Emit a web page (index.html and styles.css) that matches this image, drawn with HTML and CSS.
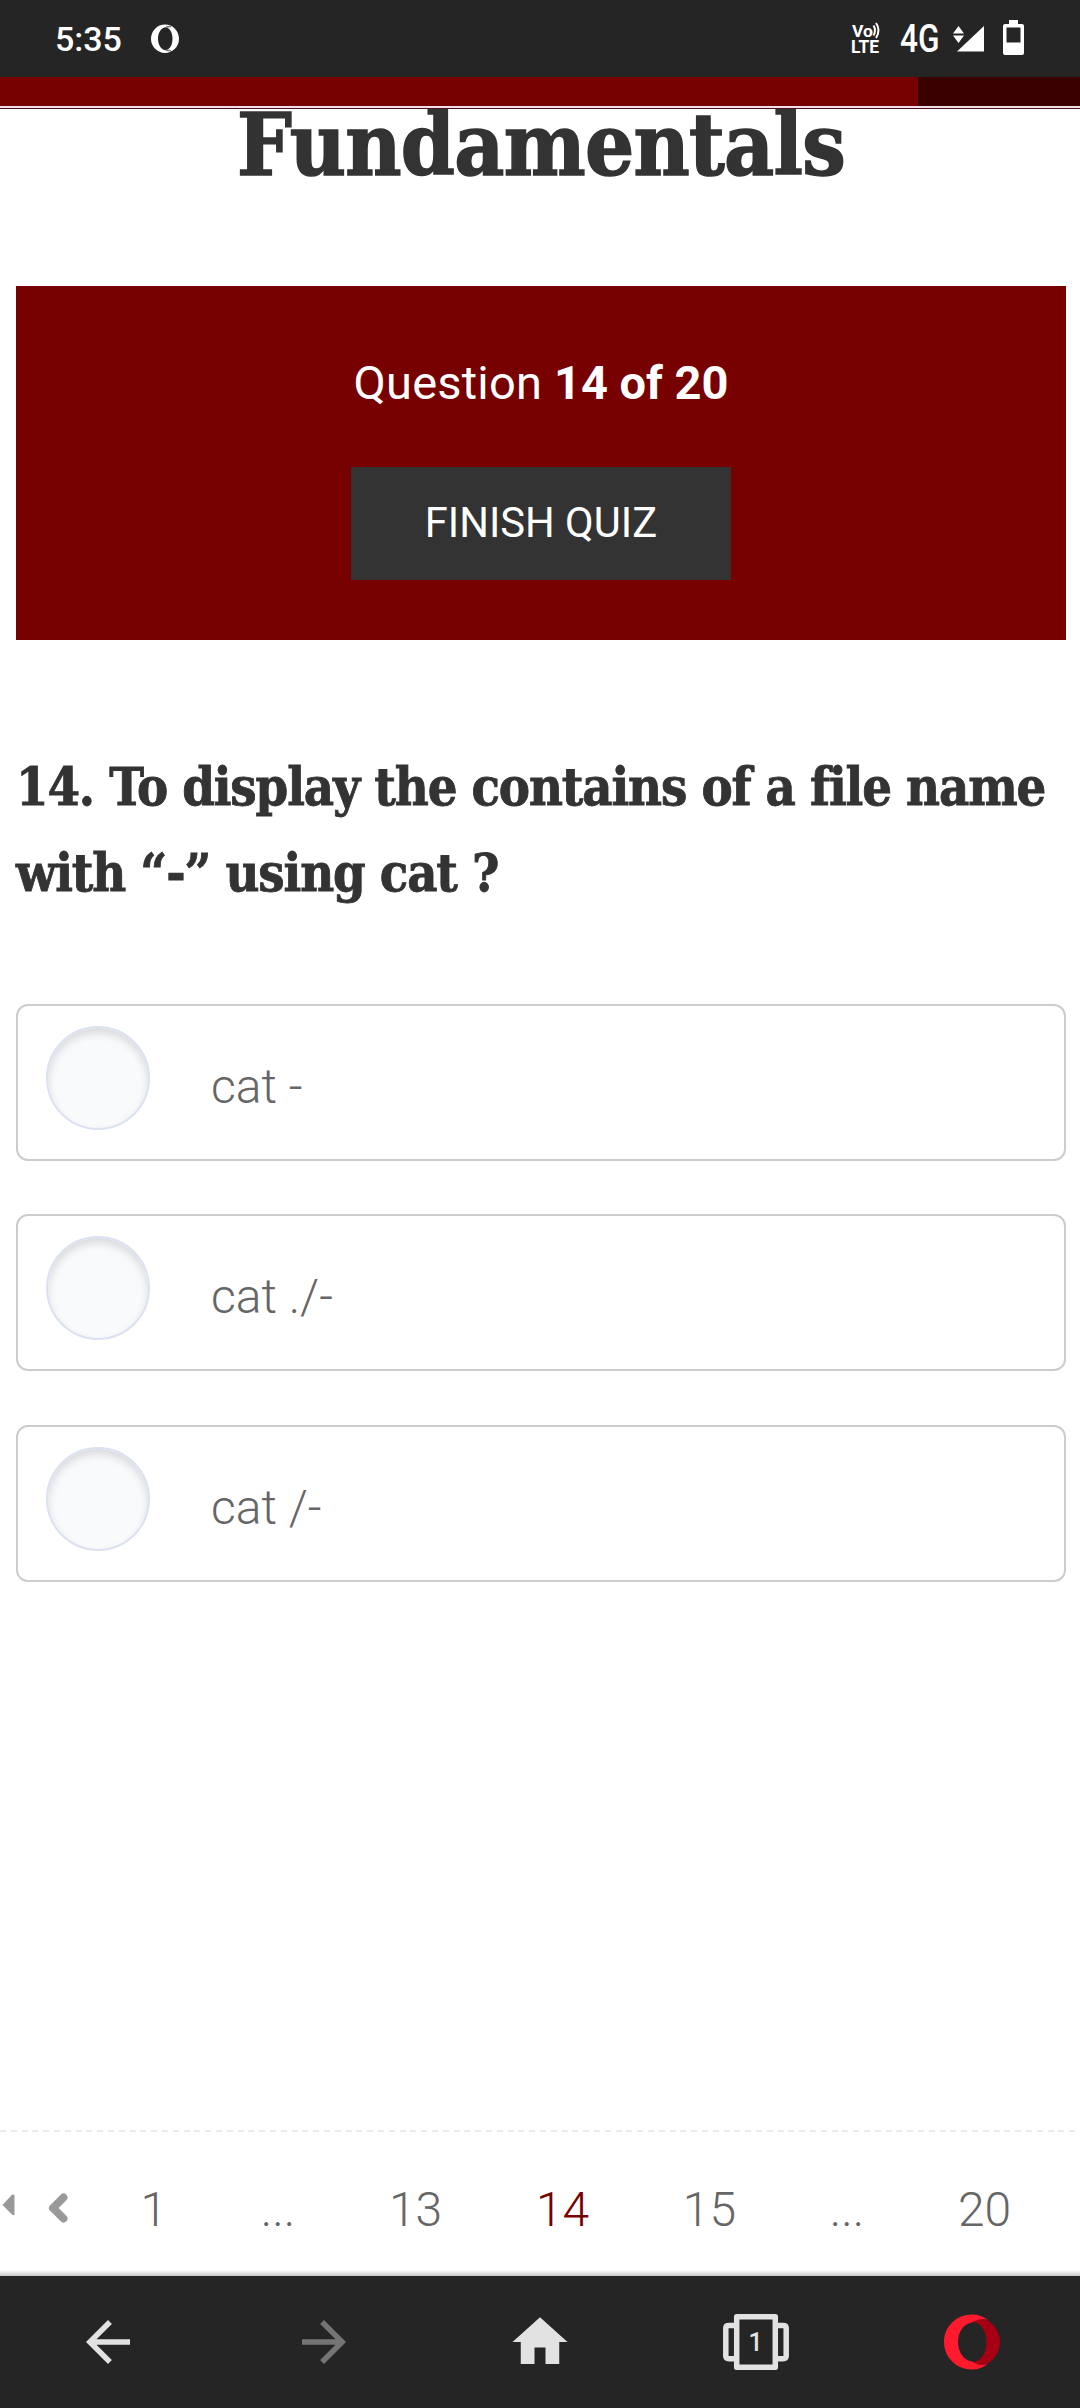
FILE: index.html
```html
<!DOCTYPE html>
<html lang="en">
<head>
<meta charset="utf-8">
<title>Fundamentals quiz</title>
<link rel="stylesheet" href="styles.css">
</head>
<body>
<div class="phone">
  <header class="status">
    <span class="clock">5:35</span>
    <svg class="opera-mini" width="28" height="30" viewBox="0 0 28 30"><path fill="#fff" fill-rule="evenodd" d="M14 0.5a14 14.2 0 0 0 0 28.4a14 14.2 0 0 0 0-28.4zM15 3.200c4.200 1 6.500 5.800 6.500 11.500s-2.300 10.500-6.500 11.500c-4.700-.3-8-5.200-8-11.500s3.300-11.200 8-11.500z"/><path d="M15 3l5-.5M15 26.300l5 .5" stroke="#777" stroke-width="1.500"/></svg>
    <div class="indicators">
      <svg class="volte" width="30" height="32" viewBox="0 0 30 32">
        <text x="1" y="14.500" font-size="17" textLength="21" lengthAdjust="spacingAndGlyphs">Vo</text>
        <text x="0" y="31" font-size="18" textLength="28" lengthAdjust="spacingAndGlyphs">LTE</text>
        <path d="M22.500 3.500q3 4.500 0 10M25 1q5 7 0 15" fill="none" stroke="#fff" stroke-width="2"/>
      </svg>
      <svg class="network" width="40" height="34" viewBox="0 0 40 34"><text x="0" y="31" font-size="38" textLength="39.500" lengthAdjust="spacingAndGlyphs">4G</text></svg>
      <svg class="signal" width="32" height="28" viewBox="0 0 32 28"><path fill="#fff" d="M31 1v25.500H4zM5.500 1l5.500 7.500H0zM0 10.500h11L5.500 18z"/></svg>
      <svg class="battery" width="21" height="36" viewBox="0 0 21 36"><path fill="#fff" fill-rule="evenodd" d="M6 0h9v4h4a2 2 0 0 1 2 2v27a2 2 0 0 1-2 2H2a2 2 0 0 1-2-2V6a2 2 0 0 1 2-2h4zM3.500 7.500v15h14v-15z"/></svg>
    </div>
  </header>
  <div class="progress"><div class="progress-fill" style="width:85%"></div></div>
  <main class="page">
    <h1 class="title">Fundamentals</h1>
    <section class="quiz-card">
      <p class="counter">Question <b>14 of 20</b></p>
      <button class="finish">FINISH QUIZ</button>
    </section>
    <h2 class="question">14. To display the contains of a file name<br>with “-” using cat ?</h2>
    <div class="options">
      <label class="option"><span class="radio"></span><span class="answer">cat -</span></label>
      <label class="option"><span class="radio"></span><span class="answer">cat ./-</span></label>
      <label class="option"><span class="radio"></span><span class="answer">cat /-</span></label>
    </div>
  </main>
  <nav class="pager">
    <svg class="first" width="15" height="30" viewBox="0 0 15 30"><path fill="#999" d="M14.500 2v20q-1.500.5-2.500-.5L2.500 12 12 1.800q1-.8 2.500.2z"/></svg>
    <svg class="prev" width="20" height="32" viewBox="0 0 20 32"><path fill="none" stroke="#999" stroke-width="8" stroke-linecap="round" stroke-linejoin="round" d="M15.500 5.500L5 16l10.500 10.500"/></svg>
    <div class="pages"><span>1</span><span>...</span><span>13</span><span class="current">14</span><span>15</span><span>...</span><span>20</span></div>
  </nav>
  <footer class="toolbar">
    <div class="tool"><svg width="66" height="66" viewBox="0 0 24 24"><path fill="#e2e2e2" d="M20 11H7.830l5.590-5.590L12 4l-8 8 8 8 1.410-1.410L7.830 13H20v-2z"/></svg></div>
    <div class="tool"><svg width="66" height="66" viewBox="0 0 24 24"><path fill="#757575" d="M12 4l-1.410 1.410L16.170 11H4v2h12.170l-5.580 5.590L12 20l8-8z"/></svg></div>
    <div class="tool"><svg width="66" height="66" viewBox="0 0 24 24"><path fill="#e2e2e2" d="M10 20v-6h4v6h5v-8h3L12 3 2 12h3v8z"/></svg></div>
    <div class="tool"><svg class="tabs" width="66" height="56" viewBox="0 0 66 56"><path fill="none" stroke="#e2e2e2" stroke-width="5.500" stroke-linejoin="round" d="M13.700 2.800h38.600v50.400H13.700zM13.700 11.500H6Q2.800 11.500 2.800 14v28Q2.800 44.700 6 44.700h7.700M52.300 11.500H60q3.200 0 3.200 2.500v28q0 2.700-3.200 2.700h-7.700"/><text x="32.500" y="37" text-anchor="middle" font-size="25">1</text></svg></div>
    <div class="tool"><svg width="56" height="56" viewBox="0 0 56 56"><path fill="#a70014" d="M18 10C25 3 36 3 44 6.500Q56 15 56 28T44 49.500C36 53 25 53 18 46l10 2.200c8 0 14.500-8 14.500-20.200S36 8 28 8z"/><path fill="#ff1b2d" fill-rule="evenodd" d="M28 .5C12.500.5 0 12.500 0 28s12.500 27.500 28 27.500c6 0 11.500-2 16-5.500-5 2.200-11 1-16-2.500-8-1-14-9-14-19.500S20 9.500 28 8.500C33 5 39 3.800 44 6 39.500 2.500 34 .5 28 .5z"/></svg></div>
  </footer>
</div>
</body>
</html>
```

FILE: styles.css
```css
* { box-sizing: border-box; }
body { margin: 0; background: #fff; font-family: Roboto, "Liberation Sans", sans-serif; }
svg { display: block; flex: none; overflow: visible; }
.phone { width: 1080px; height: 2408px; display: flex; flex-direction: column; overflow: hidden; }
.status { height: 77px; flex: none; background: #252525; color: #fff; display: flex; align-items: flex-start; padding: 0 56px 0 55px; }
.clock { font-size: 34px; font-weight: 500; line-height: 40px; margin-top: 19px; width: 96px; }
.opera-mini { margin-top: 24px; }
.indicators { display: flex; margin-left: auto; }
.indicators text { fill: #fff; font-weight: 700; }
.indicators .network text { font-weight: 500; }
.volte { margin-top: 22px; }
.network { margin: 21px 0 0 19px; }
.signal { margin: 25px 0 0 13px; }
.battery { margin: 20px 0 0 18px; }
.progress { height: 32px; flex: none; background: linear-gradient(#3a0000 0 29px, #f0e0e6 29px 31px, #4d0f1d 31px); }
.progress-fill { height: 29px; background: #770000; }
.page { flex: 1; min-height: 0; padding: 0 14px 0 16px; overflow: hidden; }
.title { margin: -14px 0 0; height: 191px; text-align: center; color: #333; font: 700 86px/100px "Roboto Slab", "DejaVu Serif Condensed", "DejaVu Serif", serif; letter-spacing: -.7px; -webkit-text-stroke: 1.500px #333; }
.quiz-card { height: 353.500px; background: #770000; color: #fff; display: flex; flex-direction: column; align-items: center; padding-top: 67px; }
.counter { margin: 0; font-size: 47px; line-height: 60px; white-space: nowrap; letter-spacing: .2px; }
.counter b { font-weight: 700; letter-spacing: 0; }
.finish { margin-top: 54px; width: 380px; height: 113px; border: 0; padding: 0 0 2px; background: #333; color: #fff; font: 400 41.700px Roboto, sans-serif; }
.question { margin: 104.500px 0 0; height: 260px; color: #333; font: 700 52px/86px "Roboto Slab", "DejaVu Serif Condensed", "DejaVu Serif", serif; letter-spacing: -1.120px; -webkit-text-stroke: .8px #333; white-space: nowrap; }
.options { display: flex; flex-direction: column; gap: 53.400px; }
.option { height: 157px; border: 2px solid #ccc; border-radius: 12px; display: flex; padding: 20px 28px; }
.radio { width: 104px; height: 104px; border: 2px solid #dbe1f0; border-radius: 50%; background: #f9fafc; box-shadow: inset 0 5px 9px rgba(0,0,0,.13); }
.answer { margin: 33px 0 0 61px; font-size: 48px; line-height: 56px; font-weight: 300; color: #666; }
.pager { height: 147px; flex: none; display: flex; background: repeating-linear-gradient(90deg, #eaeaea 0 6px, #fff 6px 10.800px) 0 1px / 100% 2px no-repeat, linear-gradient(#fff, #c8c8c8) 0 100% / 100% 6px no-repeat; }
.first { margin-top: 64px; }
.prev { margin: 63px 0 0 33px; }
.pages { display: flex; gap: 93.700px; margin: 53px 0 0 72.500px; font-size: 48px; line-height: 56px; font-weight: 300; color: #666; }
.current { color: #700; }
.toolbar { height: 132px; flex: none; display: flex; background: #252525; }
.tool { flex: 1; display: flex; align-items: center; justify-content: center; }
.tabs text { fill: #e2e2e2; font-weight: 500; }
```
